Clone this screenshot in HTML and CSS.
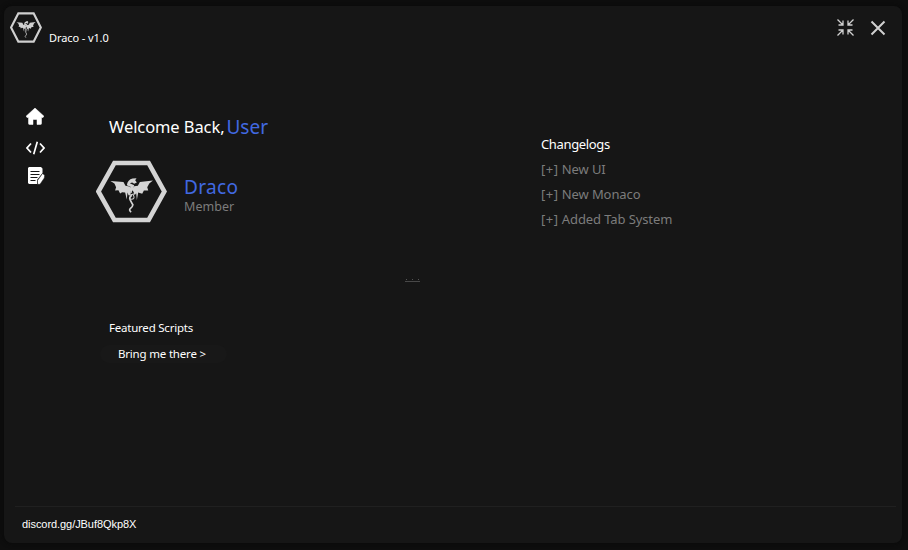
FILE: index.html
```
<!DOCTYPE html>
<html lang="en">
<head>
<meta charset="utf-8">
<title>Draco</title>
<link rel="stylesheet" href="styles.css">
</head>
<body>
<svg width="0" height="0" class="defs" aria-hidden="true">
  <symbol id="draco" viewBox="18 16 212 190" preserveAspectRatio="none">
    <path class="hex" d="M73 25H175L222 111L175 197H73L25 111Z" fill="none" stroke="currentColor"/>
    <path d="M61 79L100 82L106 94L118 96L125 104L121 112L122 124L115 122L112 114L110 135L105 114L96 113L90 117L85 107L75 108L78 98L73 87Z" fill="currentColor"/>
    <path d="M188 78L149 82L143 94L132 95L125 105L131 113L129 121L135 120L138 116L140 137L144 114L156 118L161 108L174 108L171 98L177 87Z" fill="currentColor"/>
    <path d="M110 92Q113 75 127 72L139 71L135 77L140 84L132 88L126 84L119 86L132 92L128 108L118 106L121 97Z" fill="currentColor"/>
    <path d="M125 100L122 115M125 122Q116 128 120 136T128 151Q127 157 121 162T123 173" fill="none" stroke="currentColor" stroke-width="5"/>
    <path d="M122 134Q134 135 131 125T122 122" fill="none" stroke="currentColor" stroke-width="3"/>
  </symbol>
</svg>
<div class="window">
  <header class="titlebar">
    <svg class="logo"><use href="#draco"/></svg>
    <span class="title">Draco - v1.0</span>
    <div class="controls">
      <svg class="shrink" viewBox="0 0 17 17"><path d="M.5.5L6 6M1.500 6H6V1.500M16.500 .5L11 6M11 1.500V6H15.500M.5 16.500L6 11M1.500 11H6V15.500M16.500 16.500L11 11M15.500 11H11V15.500"/></svg>
      <svg class="close" viewBox="0 0 16 16"><path d="M1.500 1.500L14.500 14.500M14.500 1.500L1.500 14.500"/></svg>
    </div>
  </header>
  <div class="body">
    <nav class="sidebar">
      <svg class="home" viewBox="0 0 18 17"><path d="M9 0L18 8.300L17 9.500H15.500V15.500Q15.500 16.500 14.500 16.500H11V11.500H7V16.500H3.500Q2.500 16.500 2.500 15.500V9.500H1L0 8.300Z" fill="currentColor" stroke="currentColor" stroke-width=".5" stroke-linejoin="round"/></svg>
      <svg class="code" viewBox="0 0 19 14"><path d="M5 2.500L1 7L5 11.500M14 2.500L18 7L14 11.500M11.300 .8L7.700 13.200" fill="none" stroke="currentColor" stroke-width="1.700"/></svg>
      <svg class="notes" viewBox="0 0 17 18"><path d="M1 0H13L14.500 1.500V6L9 13V17H1L0 16V1Z" fill="currentColor"/><path d="M2.500 4.500H11.500M2.500 7.500H11.500M2.500 10.500H9.500M2.500 13.500H7.500" stroke="#161616" stroke-width="1"/><path d="M14.500 6.500L16.700 8.200L16.300 11L12 17.300H9.500V13.500Z" fill="currentColor" stroke="#161616" stroke-width=".5"/></svg>
    </nav>
    <main class="profile">
      <h1 class="welcome"><span class="greeting">Welcome Back,</span><span class="user">User</span></h1>
      <section class="account">
        <svg class="avatar"><use href="#draco"/></svg>
        <div>
          <div class="name">Draco</div>
          <div class="role">Member</div>
        </div>
      </section>
      <h2 class="featured">Featured Scripts</h2>
      <button class="go">Bring me there &gt;</button>
    </main>
    <div class="middle"><svg viewBox="0 0 16 5"><path d="M1 .5H2M7 .5H8M13 .5H14" stroke="#555"/><path d="M0 2.500H15" stroke="#484848"/></svg></div>
    <aside class="changes">
      <h2>Changelogs</h2>
      <ul>
        <li><span class="plus">[+]</span> New UI</li>
        <li><span class="plus">[+]</span> New Monaco</li>
        <li><span class="plus">[+]</span> Added Tab System</li>
      </ul>
    </aside>
  </div>
  <footer class="footer">discord.gg/JBuf8Qkp8X</footer>
</div>
</body>
</html>
```
FILE: styles.css
```
* { box-sizing: border-box; }
body { margin: 0; height: 550px; padding: 6px 6px 7px 4px; background: #0e0e0e; color: #fff; font-family: "Noto Sans", "Open Sans", sans-serif; overflow: hidden; }
h1, h2, ul { margin: 0; padding: 0; font-weight: 400; list-style: none; }
svg { display: block; flex: none; }
.defs { position: absolute; }
.hex { stroke-width: var(--hex-stroke, 14); }
.window { height: 537px; background: #161616; border-radius: 8px; box-shadow: 0 0 5px #080808; display: flex; flex-direction: column; }
.titlebar { height: 46px; display: flex; padding: 6px 16px 0 6px; }
.logo { width: 32px; height: 31px; color: #d0d0d0; --hex-stroke: 14; }
.title { margin: 18px 0 0 7px; font-size: 11px; line-height: 16px; letter-spacing: -.1px; white-space: nowrap; }
.controls { margin-left: auto; display: flex; gap: 16px; color: #d0d0d0; }
.controls path { fill: none; stroke: currentColor; }
.shrink { width: 17px; height: 17px; margin-top: 7px; stroke-width: 1.300; }
.close { width: 16px; height: 16px; margin-top: 8px; stroke-width: 2; }
.body { flex: 1; display: grid; grid-template-columns: 88px 312px 137px 1fr; }
.sidebar { padding: 56px 0 0 22px; }
.home { width: 18px; height: 17px; }
.code { width: 19px; height: 14px; margin-top: 16px; }
.notes { width: 17px; height: 18px; margin: 12px 0 0 2px; }
.profile { padding-top: 63px; }
.welcome { margin-left: 17px; height: 24px; display: flex; font-size: 16.500px; line-height: 24px; white-space: nowrap; }
.greeting { letter-spacing: -.09px; }
.user { color: #4169e1; font-size: 19px; margin-left: 2px; }
.account { display: flex; margin: 21px 0 0 4px; height: 64px; }
.avatar { width: 71px; height: 63px; color: #d4d4d4; }
.account > div { margin: 16px 0 0 17px; }
.name { color: #4169e1; font-size: 19px; line-height: 22px; letter-spacing: .35px; }
.role { color: #7c7c7c; font-size: 12.500px; line-height: 17px; letter-spacing: .05px; }
.featured { margin: 96px 0 0 17px; font-size: 11.500px; line-height: 16px; letter-spacing: -.22px; }
.go { display: block; margin: 9px 0 0 8px; width: 127px; height: 18px; padding: 0 0 0 18px; border: 0; border-radius: 9px; background: #181818; color: #fff; font: 11.500px/18px "Noto Sans", sans-serif; letter-spacing: -.19px; text-align: left; }
.middle { padding: 227px 0 0 1px; }
.middle svg { width: 16px; height: 5px; }
.changes { padding-top: 83px; font-size: 13px; }
.changes h2 { font-size: 13px; line-height: 19px; letter-spacing: -.35px; }
.changes ul { margin-top: 3px; color: #7c7c7c; }
.changes li { line-height: 25px; letter-spacing: -.1px; }
.plus { letter-spacing: .5px; }
.footer { height: 37px; margin: 0 6px 0 11px; padding: 9px 0 0 7px; border-top: 1px solid #202020; font: 11px/16px "Liberation Sans", Arial, sans-serif; letter-spacing: -.06px; }
```
